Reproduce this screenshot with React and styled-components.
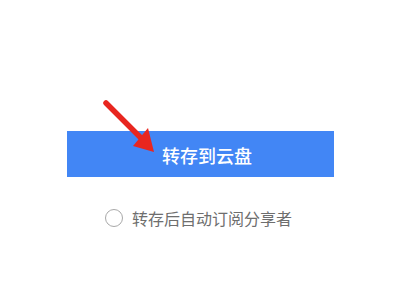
import React from "react";
import styled, { createGlobalStyle } from "styled-components";

const Global = createGlobalStyle`
  html, body { margin: 0; padding: 0; background: #ffffff; }
  body { font-family: "Noto Sans CJK SC", "Noto Sans", sans-serif; }
`;

const Page = styled.div`
  width: 400px;
  height: 300px;
  box-sizing: border-box;
  padding-top: 131px;
  display: flex;
  flex-direction: column;
  align-items: center;
  background: #ffffff;
`;

const ButtonWrap = styled.div`
  position: relative;
`;

const SaveButton = styled.button`
  width: 267px;
  height: 46px;
  border: none;
  border-radius: 0;
  background: #4286f5;
  color: #ffffff;
  font-family: "Noto Sans CJK SC", sans-serif;
  font-size: 18px;
  font-weight: 500;
  display: flex;
  align-items: center;
  justify-content: center;
  padding: 2px 0 0 14px;
  box-sizing: border-box;
`;

const Arrow = styled.svg`
  position: absolute;
  left: 30px;
  top: -36px;
  width: 70px;
  height: 62px;
  overflow: visible;
`;

const OptionRow = styled.label`
  margin-top: 31px;
  display: flex;
  align-items: center;
  gap: 9px;
  height: 20px;
  margin-left: -3px;
`;

const Circle = styled.span`
  width: 18px;
  height: 18px;
  box-sizing: border-box;
  border-radius: 50%;
  border: 1.5px solid #a8a8a8;
  display: inline-block;
`;

const OptionText = styled.span`
  font-size: 16px;
  color: #6e6e6e;
  line-height: 20px;
`;

export default function App() {
  return (
    <>
      <Global />
      <Page>
        <ButtonWrap>
          <SaveButton>转存到云盘</SaveButton>
          <Arrow viewBox="0 0 70 62">
            <line x1="9" y1="8" x2="44" y2="43" stroke="#e8261f" strokeWidth="5.5" strokeLinecap="round" />
            <polygon points="57,57 51,33 36,51" fill="#e8261f" />
          </Arrow>
        </ButtonWrap>
        <OptionRow>
          <Circle />
          <OptionText>转存后自动订阅分享者</OptionText>
        </OptionRow>
      </Page>
    </>
  );
}
